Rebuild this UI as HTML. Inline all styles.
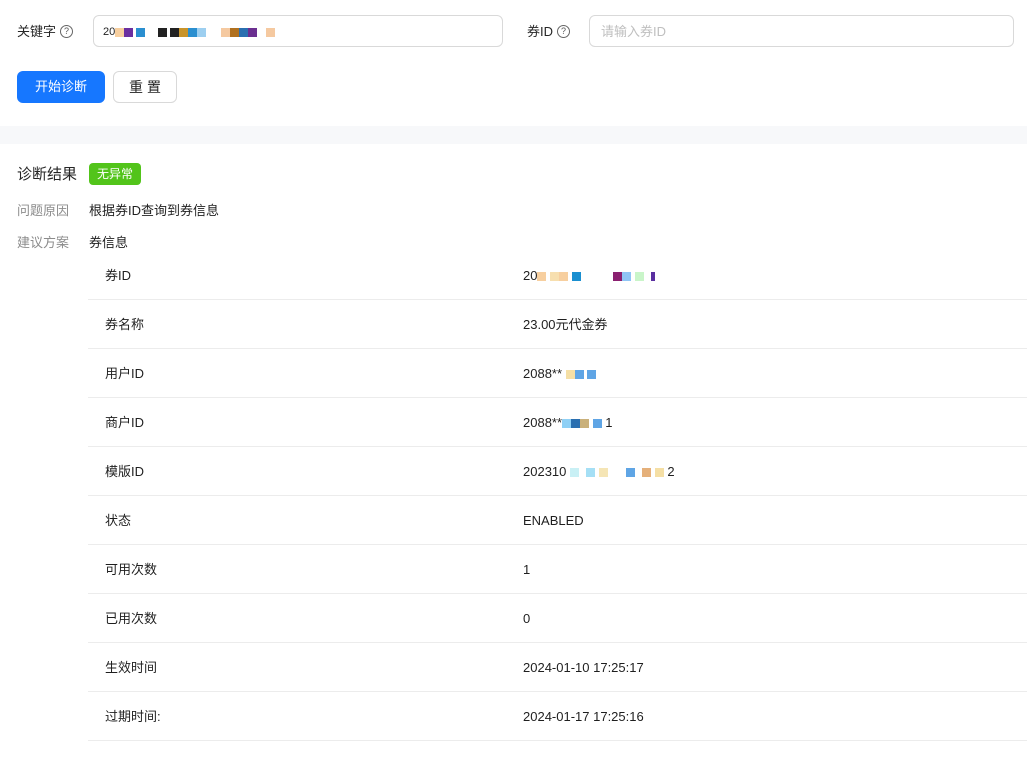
<!DOCTYPE html>
<html><head><meta charset="utf-8"><style>
*{box-sizing:border-box;margin:0;padding:0}
body{width:1027px;height:773px;background:#fff;font-family:"Liberation Sans","Noto Sans CJK SC",sans-serif;font-size:13px;color:#1f1f1f;position:relative;overflow:hidden}
.a{position:absolute;white-space:nowrap;line-height:20px}
.lbl{font-size:13px;color:#262626}
.q{display:inline-block;width:13px;height:13px;border:1px solid #666;border-radius:50%;font-size:9px;line-height:11px;text-align:center;color:#555;vertical-align:middle;margin-left:4px;position:relative;top:-1px}
.inp{border:1px solid #d9d9d9;border-radius:6px;height:32px}
.btn{border-radius:6px;height:32px;line-height:30px;text-align:center;font-size:13px}
.row{position:absolute;left:88px;width:939px;height:49px;border-bottom:1px solid #ececec}
.row span.k,.row span.v{position:absolute;top:1px;line-height:48px;white-space:nowrap}
.row .k{left:17px}.row .v{left:435px}
.sq{display:inline-block;width:9px;height:9px;vertical-align:middle}
</style></head><body>
<div class="a lbl" style="left:17px;top:22px">关键字<span class="q">?</span></div>
<div class="a inp" style="left:93px;top:15px;width:410px"></div>
<div class="a" style="left:103px;top:22px;font-size:11px">20<span class="sq" style="background:#f7cf9f"></span><span class="sq" style="background:#6b2fa0"></span> <span class="sq" style="background:#2a8fd0"></span> &nbsp; &nbsp;<span class="sq" style="background:#222"></span> <span class="sq" style="background:#222"></span><span class="sq" style="background:#c9942a"></span><span class="sq" style="background:#2a8fd0"></span><span class="sq" style="background:#9dcff0"></span> &nbsp; &nbsp; <span class="sq" style="background:#f5c9a0"></span><span class="sq" style="background:#b0701f"></span><span class="sq" style="background:#2a6fb0"></span><span class="sq" style="background:#6b2f90"></span> &nbsp; <span class="sq" style="background:#f5c9a0"></span></div>
<div class="a lbl" style="left:527px;top:22px">券ID<span class="q">?</span></div>
<div class="a inp" style="left:589px;top:15px;width:425px"></div>
<div class="a" style="left:601px;top:22px;color:#bfbfbf">请输入券ID</div>
<div class="a btn" style="left:17px;top:71px;width:88px;background:#1677ff;color:#fff;line-height:32px">开始诊断</div>
<div class="a btn" style="left:113px;top:71px;width:64px;border:1px solid #d9d9d9;letter-spacing:4px;font-size:14px;line-height:30px;padding-left:4px">重置</div>
<div class="a" style="left:0;top:126px;width:1027px;height:18px;background:#f7f8fa"></div>
<div class="a" style="left:17px;top:165px;font-size:15px;color:#262626">诊断结果</div>
<div class="a" style="left:89px;top:163px;width:52px;height:22px;background:#52c41a;color:#fff;border-radius:4px;font-size:12px;line-height:22px;text-align:center">无异常</div>
<div class="a" style="left:17px;top:201px;color:#8c8c8c">问题原因</div>
<div class="a" style="left:89px;top:201px">根据券ID查询到券信息</div>
<div class="a" style="left:17px;top:233px;color:#8c8c8c">建议方案</div>
<div class="a" style="left:89px;top:233px">券信息</div>
<div class="row" style="top:251px"><span class="k">券ID</span><span class="v">20<span class="sq" style="background:#f7cf9f"></span> <span class="sq" style="background:#f7dfaf"></span><span class="sq" style="background:#f7cf9f"></span> <span class="sq" style="background:#1a8fd0"></span> &nbsp; &nbsp; &nbsp; &nbsp; <span class="sq" style="background:#8a2070"></span><span class="sq" style="background:#8fc5f5"></span> <span class="sq" style="background:#c9f5c9"></span> &nbsp;<span class="sq" style="background:#5a2fa0;width:4px"></span></span></div>
<div class="row" style="top:300px"><span class="k">券名称</span><span class="v">23.00元代金券</span></div>
<div class="row" style="top:349px"><span class="k">用户ID</span><span class="v">2088** <span class="sq" style="background:#f5dfa5"></span><span class="sq" style="background:#5fa5e5"></span> <span class="sq" style="background:#5fa5e5"></span></span></div>
<div class="row" style="top:398px"><span class="k">商户ID</span><span class="v">2088**<span class="sq" style="background:#8fd0f5"></span><span class="sq" style="background:#2a6fb0"></span><span class="sq" style="background:#c9b07a"></span> <span class="sq" style="background:#5fa5e5"></span> 1</span></div>
<div class="row" style="top:447px"><span class="k">模版ID</span><span class="v">202310 <span class="sq" style="background:#c9f0f5"></span> &nbsp;<span class="sq" style="background:#a5dff5"></span> <span class="sq" style="background:#f5e5b5"></span> &nbsp; &nbsp; <span class="sq" style="background:#5fa5e5"></span> &nbsp;<span class="sq" style="background:#e5b07a"></span> <span class="sq" style="background:#f5dfa5"></span> 2</span></div>
<div class="row" style="top:496px"><span class="k">状态</span><span class="v">ENABLED</span></div>
<div class="row" style="top:545px"><span class="k">可用次数</span><span class="v">1</span></div>
<div class="row" style="top:594px"><span class="k">已用次数</span><span class="v">0</span></div>
<div class="row" style="top:643px"><span class="k">生效时间</span><span class="v">2024-01-10 17:25:17</span></div>
<div class="row" style="top:692px"><span class="k">过期时间:</span><span class="v">2024-01-17 17:25:16</span></div>
</body></html>
